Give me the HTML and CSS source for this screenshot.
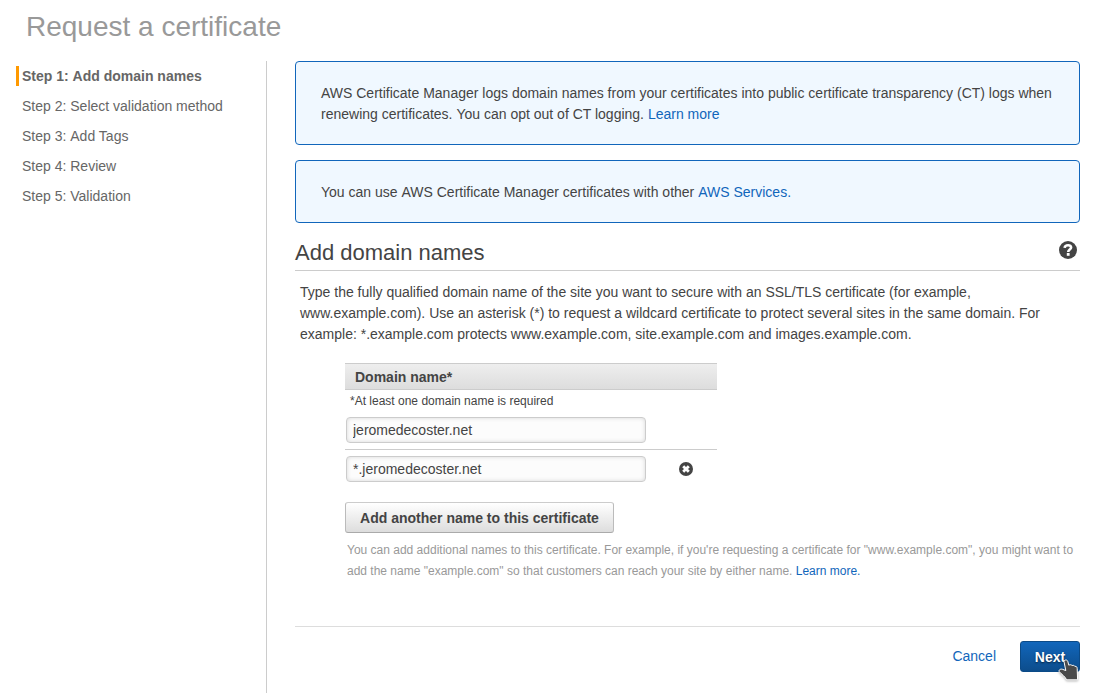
FILE: index.html
```html
<!DOCTYPE html>
<html lang="en">
<head>
<meta charset="utf-8">
<title>Request a certificate</title>
<link rel="stylesheet" href="styles.css">
</head>
<body>
<div class="page">
  <h1 class="page-title">Request a certificate</h1>
  <div class="layout">
    <nav class="steps">
      <div class="step step-active">Step 1: <span class="nudge">Add</span> domain names</div>
      <div class="step">Step 2: Select validation method</div>
      <div class="step">Step 3: <span class="nudge">Add</span> Tags</div>
      <div class="step">Step 4: Review</div>
      <div class="step">Step 5: Validation</div>
    </nav>
    <main class="content">
      <div class="notice">AWS Certificate Manager logs domain names from your certificates into public certificate transparency (CT) logs when<br>renewing certificates. <span class="nudge">You</span> can opt out of CT logging. <a class="link">Learn more</a></div>
      <div class="notice">You can use <span class="nudge">AWS</span> Certificate Manager certificates with other <a class="link nudge">AWS Services.</a></div>
      <div class="section-head">
        <h2 class="section-title">Add domain names</h2>
        <svg class="help-icon" viewBox="0 0 18 18">
          <circle cx="9" cy="9" r="9" fill="#444"/>
          <path d="M5.6 6.9C5.9 4.9 7.3 4.3 9.1 4.3C11 4.3 12.1 5.1 12.1 6.5C12.1 8.6 9.2 8.5 9.2 11" fill="none" stroke="#fff" stroke-width="2.6"/>
          <rect x="7.8" y="12" width="2.8" height="2.8" fill="#fff"/>
        </svg>
      </div>
      <p class="intro">Type the fully qualified domain name of the site you want to secure with an SSL/TLS certificate (for example,<br>www.example.com). Use an asterisk (*) to request a wildcard certificate to protect several sites in the same domain. For<br>example: *.example.com protects www.example.com, site.example.com and images.example.com.</p>
      <div class="domains">
        <div class="domains-head">Domain name*</div>
        <div class="domains-note">*At least one domain name is required</div>
        <div class="domain-row"><input class="field" type="text" value="jeromedecoster.net"></div>
        <div class="domain-row domain-row-next">
          <input class="field" type="text" value="*.jeromedecoster.net">
          <svg class="remove-icon" viewBox="0 0 14 14">
            <circle cx="7" cy="7" r="7" fill="#444"/>
            <path d="M4.2 4.2L9.8 9.8M9.8 4.2L4.2 9.8" stroke="#fff" stroke-width="2.8"/>
          </svg>
        </div>
      </div>
      <button class="button add-button">Add another name to this certificate</button>
      <p class="hint">You can add additional names to this certificate. For example, if you're requesting a certificate for "www.example.com", you might want to<br>add the name "example.com" so that customers can reach your site by either name. <a class="link">Learn more.</a></p>
      <footer class="actions">
        <a class="link">Cancel</a>
        <div class="next-wrap">
          <button class="button next-button">Next</button>
          <svg class="pointer" viewBox="0 0 22 24">
            <path d="M6 2.6C6 .6 9.3 .4 9.8 2.4L10.8 6.2C12 5.4 13.4 5.7 14 6.6C15.2 6 16.4 6.4 16.9 7.4C18.4 7.1 19.2 8 19.2 9.6L19.6 20.8H8.6C7.4 17.6 3 15 1.2 12.6C.4 10.6 3 9.6 4.8 10.4L7.8 11.6Z" fill="#4a4a4a" stroke="#fff" stroke-width="1" stroke-linejoin="round"/>
          </svg>
        </div>
      </footer>
    </main>
  </div>
</div>
</body>
</html>
```
FILE: styles.css
```css
* { box-sizing: border-box; }
body {
  margin: 0;
  background: #fff;
  color: #444;
  font: 14px/21px "Liberation Sans", Arial, sans-serif;
}
.page { height: 693px; overflow: hidden; display: flex; flex-direction: column; }
.page-title {
  margin: 0;
  padding: 9px 0 0 26px;
  height: 61px;
  font-size: 28px;
  line-height: 36px;
  font-weight: normal;
  color: #999;
}
.layout { display: flex; flex: 1; }
.steps {
  width: 267px;
  border-right: 1px solid #ccc;
  padding: 5px 0 0 16px;
  display: flex;
  flex-direction: column;
  gap: 10px;
}
.step { height: 20px; line-height: 20px; padding-left: 6px; color: #666; }
.step-active { border-left: 3px solid #f90; padding-left: 3px; font-weight: bold; }
.nudge { margin-left: .02px; }
.content { width: 813px; padding-left: 28px; }
.notice {
  border: 1px solid #1166bb;
  border-radius: 4px;
  background: #f0f8ff;
  padding: 21px 25px 19px;
  margin-bottom: 15px;
  white-space: nowrap;
}
.link { color: #1166bb; text-decoration: none; }
.section-head {
  display: flex;
  justify-content: space-between;
  height: 33px;
  border-bottom: 1px solid #ccc;
  padding-right: 3px;
}
.section-title { margin: 0; font-size: 22px; line-height: 30px; font-weight: normal; }
.help-icon { width: 18px; height: 18px; margin-top: 3px; }
.intro { margin: 11px 0 18px 5px; white-space: nowrap; }
.domains { width: 372px; margin-left: 50px; }
.domains-head {
  height: 27px;
  border: solid #ccc;
  border-width: 1px 0;
  background: linear-gradient(#eee, #ddd);
  padding-left: 10px;
  line-height: 26px;
  font-weight: bold;
}
.domains-note { height: 27px; padding-left: 5px; font-size: 12px; line-height: 22px; }
.domain-row { display: flex; align-items: flex-start; height: 32px; padding-left: 1px; }
.domain-row-next { border-top: 1px solid #ccc; padding-top: 6px; gap: 33px; height: 33px; }
.field {
  width: 300px;
  height: 26px;
  border: 1px solid #ccc;
  border-radius: 4px;
  padding: 0 6px;
  background: #fcfcfc;
  box-shadow: inset 0 0 4px rgba(0, 0, 0, .15);
  color: #444;
  font: inherit;
}
.remove-icon { width: 14px; height: 14px; margin-top: 6px; }
.button { border-radius: 3px; height: 31px; padding: 2px 0 0; font: inherit; font-weight: bold; }
.add-button {
  display: block;
  width: 269px;
  margin: 20px 0 0 50px;
  border: 1px solid #bbb;
  border-top-color: #ccc;
  border-bottom-color: #aaa;
  background: linear-gradient(#fff, #ddd);
  color: #444;
}
.hint { margin: 7px 0 44px 52px; color: #999; font-size: 12px; line-height: 21px; white-space: nowrap; }
.actions {
  border-top: 1px solid #ddd;
  padding-top: 14px;
  display: flex;
  justify-content: flex-end;
  align-items: center;
  gap: 24px;
}
.next-wrap { position: relative; height: 31px; }
.next-button {
  width: 60px;
  border: 1px solid #0b4a87;
  background: linear-gradient(#1166bb, #0d4d8c);
  color: #fff;
  text-shadow: 0 1px 2px rgba(0, 0, 0, .6);
}
.pointer {
  position: absolute;
  left: 38px;
  top: 18px;
  width: 22px;
  height: 24px;
  filter: drop-shadow(0 1px 1px rgba(0, 0, 0, .3));
}
```
